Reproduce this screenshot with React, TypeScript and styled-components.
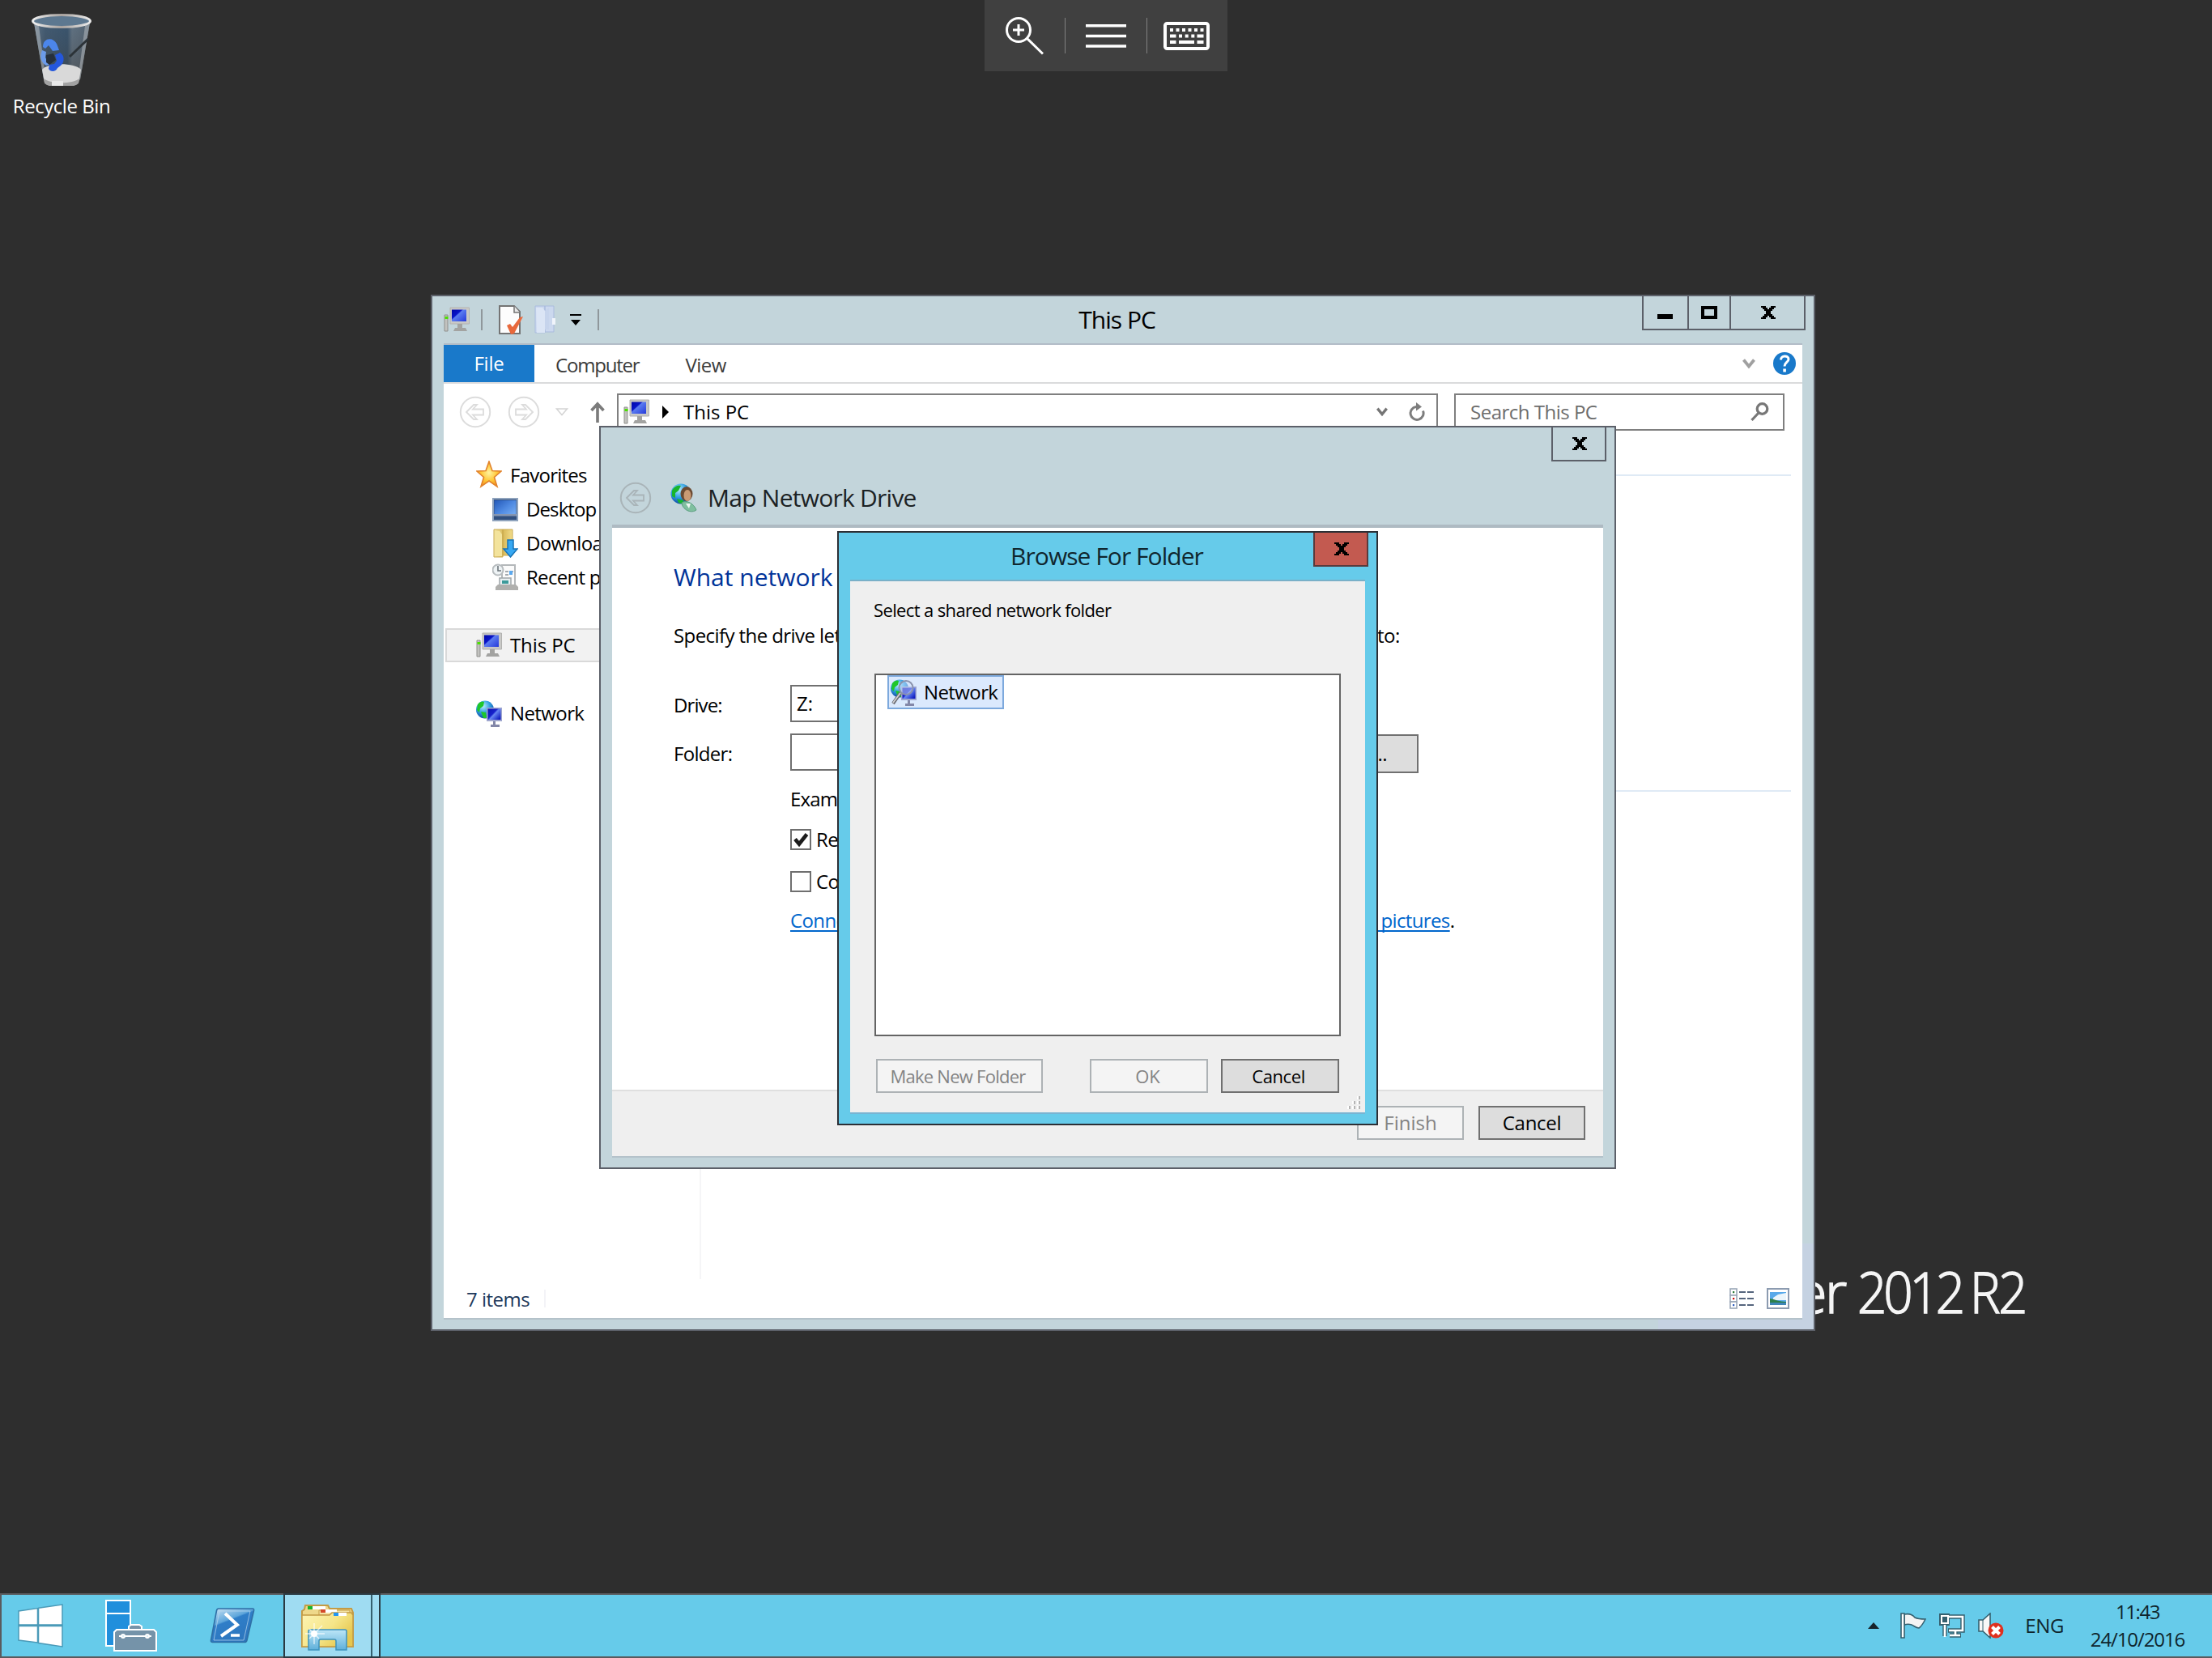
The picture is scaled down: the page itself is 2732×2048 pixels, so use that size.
import React from 'react';
import styled, { createGlobalStyle, css } from 'styled-components';

const GlobalStyle = createGlobalStyle`
  * { box-sizing: border-box; }
  html, body { margin: 0; padding: 0; }
  body { background: #2e2e2e; overflow: hidden; }
  svg { display: block; flex: none; }
`;

const color = {
  desktop: '#2e2e2e',
  frame: '#c3d5db',
  frameTint: '#c5d2e2',
  frameEdge: '#5c6069',
  active: '#66cbea',
  activeEdge: '#2c2f35',
  face: '#efefef',
  link: '#0066cc',
};

/* ---------- shared pieces ---------- */

const Label = styled.span<{ $track?: number; $size?: number; $color?: string }>`
  font-size: ${p => p.$size ?? 24}px;
  letter-spacing: ${p => p.$track ?? 0}px;
  color: ${p => p.$color ?? '#000'};
  white-space: pre;
`;

const Desktop = styled.main`
  position: relative;
  display: flex;
  flex-direction: column;
  justify-content: space-between;
  width: 2732px;
  height: 2048px;
  overflow: hidden;
  background: ${color.desktop};
  font-family: 'Open Sans', 'Noto Sans', sans-serif;
  font-size: 24px;
  line-height: 34px;
  color: #000;
`;

const Shortcut = styled.div`
  display: flex;
  flex-direction: column;
  align-items: center;
  gap: 8px;
  width: 152px;
  padding-top: 10px;
`;

const Watermark = styled.div`
  position: absolute;
  left: 2092px;
  top: 1547px;
  display: flex;
  height: 96px;
  line-height: 96px;
`;

const MarkWord = styled.span<{ $width: number; $track: number; $narrow?: number }>`
  width: ${p => p.$width}px;
  font-size: 70px;
  font-weight: 300;
  letter-spacing: ${p => p.$track}px;
  color: #f5f5f5;
  -webkit-text-stroke: 1.6px #f5f5f5;
  white-space: pre;
  transform: scaleX(${p => p.$narrow ?? 1});
  transform-origin: left center;
`;

const SessionBar = styled.div`
  position: absolute;
  left: 1216px;
  top: 0;
  display: flex;
  align-items: center;
  width: 300px;
  height: 88px;
  background: #404040;
`;

const SessionItem = styled.div<{ $w: number }>`
  display: flex;
  align-items: center;
  justify-content: center;
  width: ${p => p.$w}px;
  height: 44px;
  & + & { border-left: 1px solid #828282; }
`;

/* ---------- windows ---------- */

const Window = styled.section<{ $x: number; $y: number; $w: number; $h: number; $active?: boolean }>`
  position: absolute;
  left: ${p => p.$x}px;
  top: ${p => p.$y}px;
  display: flex;
  flex-direction: column;
  width: ${p => p.$w}px;
  height: ${p => p.$h}px;
  border: 2px solid ${p => (p.$active ? color.activeEdge : color.frameEdge)};
  background: ${p => (p.$active ? color.active : color.frame)};
`;

const ExplorerWindow = styled(Window)`
  background:
    linear-gradient(${color.frameTint}, ${color.frameTint}) right bottom / 192px 106px no-repeat,
    ${color.frame};
`;

const TitleBar = styled.header<{ $h: number }>`
  display: grid;
  grid-template-columns: 1fr auto 1fr;
  height: ${p => p.$h}px;
  line-height: ${p => p.$h}px;
  padding-right: 10px;
`;

const Title = styled(Label)<{ $shift?: number }>`
  padding-left: ${p => p.$shift ?? 0}px;
`;

const QuickAccess = styled.div`
  display: flex;
  align-items: center;
  padding: 0 0 0 14px;
`;

const QuickRule = styled.i<{ $before: number; $after: number }>`
  width: 2px;
  height: 26px;
  margin: 0 ${p => p.$after}px 0 ${p => p.$before}px;
  background: #8f979b;
`;

const Spacer = styled.i<{ $w: number }>`
  flex: none;
  width: ${p => p.$w}px;
`;

const Captions = styled.div`
  display: flex;
  justify-self: end;
  height: 42px;
`;

const CaptionButton = styled.button<{ $w: number; $last?: boolean; $danger?: boolean }>`
  display: flex;
  align-items: center;
  justify-content: center;
  width: ${p => p.$w}px;
  height: 42px;
  padding: 0 0 0 ${p => (p.$last ? 2 : 0)}px;
  border: solid ${p => (p.$danger ? '#5a3a3c' : color.frameEdge)};
  border-width: 0 ${p => (p.$last ? 2 : 0)}px 2px 2px;
  background: ${p => (p.$danger ? '#c35a50' : 'transparent')};
`;

const Client = styled.div<{ $top: string; $topSize: number; $bottom: string; $face?: boolean }>`
  display: flex;
  flex: 1;
  flex-direction: column;
  min-height: 0;
  margin: 0 14px 12px;
  border-top: ${p => p.$topSize}px solid ${p => p.$top};
  border-bottom: 2px solid ${p => p.$bottom};
  background: ${p => (p.$face ? color.face : '#fff')};
  background-clip: padding-box;
`;

/* ---------- explorer ---------- */

const Ribbon = styled.nav`
  display: flex;
  align-items: center;
  height: 48px;
  padding-right: 8px;
  border-bottom: 2px solid #dadbdc;
`;

const FileTab = styled.div`
  display: flex;
  align-items: center;
  justify-content: center;
  width: 112px;
  height: 46px;
  background: #1979ca;
`;

const Tab = styled.div<{ $left: number }>`
  padding: 4px 0 0 ${p => p.$left}px;
`;

const Push = styled.i`
  flex: 1;
`;

const AddressRow = styled.div`
  display: flex;
  align-items: center;
  height: 70px;
  padding: 0 22px 0 19px;
`;

const Field = styled.div<{ $w: number }>`
  display: flex;
  align-items: center;
  width: ${p => p.$w}px;
  height: 46px;
  border: 2px solid #7f7f7f;
  background: #fff;
`;

const Panes = styled.div`
  display: flex;
  flex: 1;
`;

const NavPane = styled.aside`
  display: flex;
  flex-direction: column;
  width: 318px;
  padding: 22px 0 0 2px;
  border-right: 2px solid #f5f5f7;
`;

const NavItem = styled.div<{ $depth?: number; $gap?: number; $selected?: boolean }>`
  display: flex;
  align-items: center;
  gap: 10px;
  height: 42px;
  margin-top: ${p => p.$gap ?? 0}px;
  padding-left: ${p => (p.$depth ? 58 : 38)}px;
  ${p => p.$selected && css`
    padding-left: 36px;
    border: 2px solid #d9d9d9;
    background: #f2f2f2;
  `}
`;

const ContentPane = styled.div`
  display: flex;
  flex: 1;
  flex-direction: column;
  padding: 42px 14px 0 20px;
`;

const GroupRule = styled.i<{ $gap?: number }>`
  height: 2px;
  margin-top: ${p => p.$gap ?? 0}px;
  background: #dfeaf5;
`;

const StatusBar = styled.footer`
  display: flex;
  align-items: center;
  height: 48px;
  padding: 0 16px 0 28px;
`;

const StatusText = styled(Label)`
  padding-top: 2px;
`;

const StatusRule = styled.i`
  width: 2px;
  height: 22px;
  margin-left: 18px;
  background: #f3f3f7;
`;

/* ---------- dialogs ---------- */

const WizardHeader = styled.div`
  display: flex;
  align-items: center;
  height: 78px;
  padding: 12px 0 0 23px;
`;

const WizardBody = styled.div`
  display: flex;
  flex: 1;
  flex-direction: column;
  padding: 31px 0 0 76px;
`;

const Line = styled.div<{ $h: number; $gap?: number; $indent?: boolean }>`
  display: flex;
  align-items: center;
  height: ${p => p.$h}px;
  margin-top: ${p => p.$gap ?? 0}px;
  padding-left: ${p => (p.$indent ? 144 : 0)}px;
`;

const FieldName = styled.div`
  width: 144px;
  padding-top: 3px;
`;

const TextBox = styled.div`
  display: flex;
  align-items: center;
  width: 596px;
  height: 46px;
  padding-left: 6px;
  border: 2px solid #707070;
  background: #fff;
`;

const CheckBox = styled.span`
  display: flex;
  align-items: center;
  justify-content: center;
  width: 26px;
  height: 26px;
  margin-right: 6px;
  border: 2px solid #6f6f6f;
  background: #fff;
`;

const Link = styled.a`
  color: ${color.link};
  letter-spacing: -0.63px;
  white-space: pre;
  text-decoration: underline;
  text-decoration-thickness: 2px;
  text-decoration-skip-ink: none;
  text-underline-offset: 3px;
`;

const WizardFooter = styled.footer`
  display: flex;
  justify-content: flex-end;
  gap: 18px;
  height: 82px;
  padding: 18px 22px 0 0;
  border-top: 2px solid #dfdfdf;
  background: ${color.face};
`;

const PushButton = styled.button<{ $w: number; $off?: boolean; $size?: number; $track?: number; $inset?: number }>`
  display: flex;
  align-items: center;
  justify-content: center;
  width: ${p => p.$w}px;
  height: 42px;
  padding: 0 ${p => p.$inset ?? 0}px 0 0;
  border: 2px solid ${p => (p.$off ? '#adb2b5' : '#707070')};
  background: ${p => (p.$off ? '#f4f4f4' : '#dddddd')};
  color: ${p => (p.$off ? '#838383' : '#000')};
  font-family: inherit;
  font-size: ${p => p.$size ?? 24}px;
  letter-spacing: ${p => p.$track ?? 0}px;
  line-height: 34px;
  white-space: pre;
`;

const BrowseButton = styled(PushButton)`
  height: 48px;
  margin-top: 4px;
`;

const Prompt = styled.div`
  height: 114px;
  padding: 18px 0 0 29px;
`;

const Tree = styled.div`
  height: 448px;
  margin: 0 30px;
  padding-left: 14px;
  border: 2px solid #646464;
  background: #fff;
`;

const TreeItem = styled.div`
  display: flex;
  align-items: center;
  gap: 9px;
  width: 144px;
  height: 42px;
  padding-left: 2px;
  border: 2px solid #7da9dd;
  background: #dbe9fd;
`;

const DialogButtons = styled.div`
  display: flex;
  padding: 28px 0 0 32px;
`;

const GripRow = styled.div`
  display: flex;
  flex: 1;
  align-items: flex-end;
  justify-content: flex-end;
  padding: 0 5px 3px 0;
`;

/* ---------- task bar ---------- */

const TaskBar = styled.footer`
  display: flex;
  align-items: center;
  height: 80px;
  border: solid #5a5b5e;
  border-width: 2px 0 2px 2px;
  background: ${color.active};
`;

const TaskSlot = styled.div<{ $w: number; $pad: number }>`
  display: flex;
  align-items: center;
  width: ${p => p.$w}px;
  height: 76px;
  padding-left: ${p => p.$pad}px;
`;

const RunningTask = styled.div`
  display: flex;
  width: 120px;
  height: 80px;
  border: 2px solid #2b3a42;
  background: #9fdcf2;
`;

const RunningFace = styled.div`
  display: flex;
  align-items: center;
  width: 108px;
  padding: 5px 0 0 20px;
  border-right: 2px solid #35606f;
`;

const Tray = styled.div`
  display: flex;
  align-items: center;
  margin-left: auto;
  padding-right: 32px;
`;

const Clock = styled.div`
  display: flex;
  flex-direction: column;
  align-items: center;
  width: 120px;
`;

/* ---------- drawings ---------- */

const CloseGlyph = () => (
  <svg width="18" height="16" viewBox="0 0 9 8" shapeRendering="crispEdges">
    <path d="M0 0h3v1h1v1h1V1h1V0h3v1H8v1H7v1H6v2h1v1h1v1h1v1H6V7H5V6H4v1H3v1H0V7h1V6h1V5h1V3H2V2H1V1H0z" />
  </svg>
);

const MinGlyph = () => (
  <svg width="20" height="16" viewBox="0 0 20 16"><path d="M0 10h19v6H0z" /></svg>
);

const MaxGlyph = () => (
  <svg width="20" height="16" viewBox="0 0 20 16"><path d="M0 0h20v16H0zM4 4v8h12V4z" fillRule="evenodd" /></svg>
);

const ThisPcIcon = () => (
  <svg width="32" height="32" viewBox="0 0 32 32">
    <defs>
      <linearGradient id="pcScreen" x1="0" y1="0" x2="1" y2=".9">
        <stop offset="0" stopColor="#0008a8" /><stop offset=".38" stopColor="#0914c8" />
        <stop offset=".45" stopColor="#5b7cf0" /><stop offset="1" stopColor="#2a3fdc" />
      </linearGradient>
    </defs>
    <path d="M1 10h4v20H1z" fill="#c2c2bf" stroke="#8f8f8c" />
    <path d="M1.500 12h4v3h-4z" fill="#4be000" />
    <path d="M8 1h23.500v20H8z" fill="#c9c9c7" stroke="#b2b2b0" />
    <path d="M10 3.500h18v14.500H10z" fill="url(#pcScreen)" />
    <path d="M17 21h6v5h4l2 4H12l2-4h3z" fill="#a3a3a1" />
  </svg>
);

const NetworkIcon = ({ search }: { search?: boolean }) => (
  <svg width="32" height="33" viewBox="0 0 32 33">
    <defs>
      <radialGradient id="netGlobe" cx=".4" cy=".3" r=".75">
        <stop offset="0" stopColor="#b8ecff" /><stop offset=".5" stopColor="#2f9fe0" /><stop offset="1" stopColor="#0a3c9c" />
      </radialGradient>
      <linearGradient id="netScreen" x1="0" y1="0" x2="1" y2=".8">
        <stop offset="0" stopColor="#0a12b4" /><stop offset=".45" stopColor="#1722cc" />
        <stop offset=".55" stopColor="#6687f2" /><stop offset="1" stopColor="#101cc0" />
      </linearGradient>
    </defs>
    <circle cx="11" cy="11.500" r="11" fill="url(#netGlobe)" />
    <path d="M2 5c3-4 7-4 8-3l-1 5-4 3-1 5-3-3zM6 14l6 1 1 7-4 0z" fill="#1fc72a" />
    <path d="M13 9h19v17H13z" fill="#9fa6cf" />
    <path d="M14.500 10.500h16v13.500h-16z" fill="url(#netScreen)" />
    <path d="M21 26h3v4h5v3H18v-3h3z" fill="#8387a8" />
    {search && (
      <>
        <circle cx="19" cy="10.500" r="8.500" fill="#cfe3ff" fillOpacity=".5" stroke="#8b93ad" strokeWidth="2" />
        <path d="M12 17 3 30" stroke="#6d6d74" strokeWidth="4" />
        <path d="M12 17 3 29" stroke="#d5d5d8" strokeWidth="1.500" />
      </>
    )}
  </svg>
);

const PropertiesIcon = () => (
  <svg width="30" height="36" viewBox="0 0 30 36">
    <path d="M1 1h18l7 7v27H1z" fill="#fdfdfd" stroke="#747474" strokeWidth="2" />
    <path d="M19 1v8h7" fill="#e9e9e9" stroke="#747474" strokeWidth="1.500" />
    <path d="M10 25l4-2 3 4 9-12 4-1-11 21-4 1z" fill="#e8693c" />
  </svg>
);

const NewFolderIcon = () => (
  <svg width="26" height="36" viewBox="0 0 26 36">
    <path d="M1 1h12v33H1zM13 1h11v32H13z" fill="#cbd8ee" stroke="#a9bbdd" />
    <path d="M2 3h8l3 4v27H3z" fill="#dbe5f5" /><path d="M13 7l5-4v27h-5z" fill="#c6d4ec" /><path d="M22 16h4v8h-4z" fill="#f0f4fb" />
  </svg>
);

const CircleArrow = ({ stroke, right }: { stroke: string; right?: boolean }) => (
  <svg width="40" height="40" viewBox="0 0 40 40" fill="none" stroke={stroke}>
    <circle cx="20" cy="20" r="18.200" strokeWidth="2" />
    <path transform={right ? 'rotate(180 20 20)' : undefined} strokeWidth="1.800" d="M9 20l9-9h4l-5 5.500h13v7H17l5 5.500h-4z" />
  </svg>
);

const StarIcon = () => (
  <svg width="32" height="36" viewBox="0 0 32 36">
    <defs><radialGradient id="star" cx=".5" cy=".45" r=".55"><stop offset="0" stopColor="#fff3a0" /><stop offset=".6" stopColor="#ffc737" /><stop offset="1" stopColor="#f59a23" /></radialGradient></defs>
    <path d="M16 1l4 11.500 11 .500-8.500 7.500L26 32l-10-7L6 32l3.500-11.500L1 13l11-.500z" fill="url(#star)" stroke="#e2832b" strokeWidth="1.600" />
  </svg>
);

const DesktopIcon = () => (
  <svg width="32" height="29" viewBox="0 0 32 29">
    <defs><linearGradient id="desk" x1="0" y1="0" x2="1" y2=".8"><stop offset="0" stopColor="#2358b8" /><stop offset=".6" stopColor="#4f8ae2" /><stop offset="1" stopColor="#6fa6ee" /></linearGradient></defs>
    <path d="M1 1h30v27H1z" fill="#31507f" stroke="#8fa3bd" strokeWidth="2" />
    <path d="M2.500 3h27v17h-27z" fill="url(#desk)" /><path d="M2 20h28v2.500H2z" fill="#8595b0" />
  </svg>
);

const DownloadsIcon = () => (
  <svg width="32" height="36" viewBox="0 0 32 36">
    <defs><linearGradient id="dlFolder"><stop offset="0" stopColor="#f6e9a8" /><stop offset=".5" stopColor="#d9ba5a" /><stop offset="1" stopColor="#f2dd8b" /></linearGradient></defs>
    <path d="M2 1h11v34H2zM13 1h12v32H13z" fill="url(#dlFolder)" stroke="#c9a94e" />
    <path d="M3 3h6l3 4v27H4z" fill="#f3e39c" />
    <path d="M19 14h7v11h5l-8.500 10L14 25h5z" fill="#37a8f2" stroke="#1673b8" strokeWidth="1.500" />
  </svg>
);

const RecentIcon = () => (
  <svg width="32" height="34" viewBox="0 0 32 34">
    <path d="M12 2h16v26H12z" fill="#fbfbfb" stroke="#b4b8ba" strokeWidth="2" />
    <path d="M16 10h4M22 10h4M16 14h4" stroke="#a5abb0" strokeWidth="2" /><path d="M21 9h4v5h-4z" fill="#5aa8ee" />
    <path d="M9 18h14v9H9z" fill="#e9f0f2" stroke="#a0a7aa" strokeWidth="1.500" /><path d="M12 21h8v4h-8z" fill="#3c9a9a" />
    <path d="M7 26h22l3 3v4H4v-4z" fill="#b0b0ae" />
    <circle cx="7" cy="8" r="6.500" fill="#eef3f5" stroke="#b7bcbf" strokeWidth="2" /><path d="M7 3v6h4" stroke="#6b747a" strokeWidth="1.600" fill="none" />
  </svg>
);

const MapDriveIcon = () => (
  <svg width="33" height="36" viewBox="0 0 33 36">
    <circle cx="13" cy="13" r="12.500" fill="url(#netGlobe)" />
    <path d="M2 9c3-6 8-7 11-6l-3 6-4 3 0 6-4-2zM8 19l8 2 0 5-6-2z" fill="#18b52c" />
    <path d="M14 24c6-4 15 1 18 9-4 3-12 3-17-5z" fill="#7fbf9f" stroke="#5a9f7f" />
    <ellipse cx="20" cy="13" rx="7.500" ry="9" fill="#6b4a32" /><ellipse cx="21" cy="15" rx="4.500" ry="7" fill="#c99a74" />
    <path d="M19 25l4 6 2-6z" fill="#eef6f2" />
  </svg>
);

const Chevron = ({ c, w, h }: { c: string; w: number; h: number }) => (
  <svg width={w} height={h} viewBox="0 0 16 13"><path d="M1.500 1.500 8 9.500l6.500-8" fill="none" stroke={c} strokeWidth="3.800" /></svg>
);

const HelpIcon = () => (
  <svg width="28" height="28" viewBox="0 0 28 28">
    <circle cx="14" cy="14" r="14" fill="#1979ca" />
    <path d="M9.500 9.500c0-6 9.500-6 9.500-.800 0 3.700-5 4-5 8.800" fill="none" stroke="#fff" strokeWidth="3" />
    <path d="M12.300 20.500h3.600v4h-3.600z" fill="#fff" />
  </svg>
);

const RecycleBin = () => (
  <svg width="76" height="96" viewBox="0 0 76 96">
    <defs>
      <linearGradient id="binBody"><stop offset="0" stopColor="#8c9aa5" /><stop offset=".2" stopColor="#50667a" /><stop offset=".6" stopColor="#3f5a72" /><stop offset=".68" stopColor="#8b949a" /><stop offset="1" stopColor="#71777b" /></linearGradient>
      <linearGradient id="binRim"><stop offset="0" stopColor="#f0f0f0" /><stop offset=".5" stopColor="#a8a29e" /><stop offset="1" stopColor="#ececec" /></linearGradient>
      <linearGradient id="binFade" x1="0" y1="0" x2="0" y2="1"><stop offset="0" stopColor="#35506b" stopOpacity=".5" /><stop offset="1" stopColor="#3a3c3e" stopOpacity=".7" /></linearGradient>
    </defs>
    <path d="M4 18h69l-12 70c-8 8-36 8-45 0z" fill="url(#binBody)" />
    <path d="M4 18h69l-12 70c-8 8-36 8-45 0z" fill="url(#binFade)" />
    <path d="M4 18l12 70 3 2L10 22zM73 18L61 88l-3 2 9-68z" fill="#c9ccce" fillOpacity=".45" />
    <path d="M14 76c6-9 41-9 48 0l-3 16c-8 7-33 7-42 0z" fill="#d9d9d9" />
    <path d="M16 87c8 7 36 7 44 0l-1 6c-8 7-34 7-42 0z" fill="#a2a2a2" /><path d="M26 90h14v7H26z" fill="#e9e9e9" />
    <path d="M15 48c0-11 12-13 17-4l3 8-8 1-5-7-4 4z" fill="#4c86ea" />
    <path d="M14 52l5 2-1 7 5 9-4 1c-7-4-8-12-5-19z" fill="#6b9bea" />
    <path d="M19 58l9-2 3 8-8 6-4-3z" fill="#26303c" />
    <path d="M30 58l6-3c6 3 6 12 1 16l-4 3c-2 5-9 5-11 1l1-5 6-1 3-4z" fill="#2457dd" />
    <path d="M71 38 48 60" stroke="#2c3338" strokeWidth="3" />
    <ellipse cx="38" cy="16" rx="35.500" ry="7.500" fill="#5d7890" stroke="url(#binRim)" strokeWidth="3" />
  </svg>
);

const ZoomIcon = () => (
  <svg width="47" height="47" viewBox="0 0 47 47" fill="none" stroke="#fff" strokeWidth="3">
    <circle cx="16" cy="16" r="14.500" /><path d="M26.500 26.500 46 45.500M9 16h14M16 9v14" />
  </svg>
);

const MenuIcon = () => (
  <svg width="50" height="29" viewBox="0 0 50 29" fill="#fff"><path d="M0 0h50v3.500H0zM0 12.700h50v3.500H0zM0 25.300h50v3.500H0z" /></svg>
);

const KeyboardIcon = () => (
  <svg width="57" height="35" viewBox="0 0 57 35">
    <rect x="2" y="2" width="53" height="31" rx="2.500" fill="none" stroke="#fff" strokeWidth="4" />
    <path fill="#fff" d="M8 8h4v4H8zM15.500 8h4v4h-4zM23 8h4v4h-4zM30.500 8h4v4h-4zM38 8h4v4h-4zM45.500 8h4v4h-4zM8 15.500h7.500v4H8zM19 15.500h4v4h-4zM26.700 15.500h4v4h-4zM34.300 15.500h4v4h-4zM41.500 15.500h8v4h-8zM8 23h7.500v4H8zM19 23h19v4H19zM41.500 23h8v4h-8z" />
  </svg>
);

const DetailsViewIcon = () => (
  <svg width="30" height="26" viewBox="0 0 30 26">
    {['#2f7a3a', '#c81010', '#2e5fc0'].map((c, i) => (
      <g key={c} transform={`translate(0 ${i * 8})`}>
        <rect x="1" y="1" width="8" height="8" fill="#fff" stroke="#9aa7b7" strokeWidth="1.600" />
        <rect x="4" y="4" width="2.200" height="2.200" fill={c} />
        <path d="M12 5h8M22 5h8" stroke="#55657d" strokeWidth="2" />
      </g>
    ))}
  </svg>
);

const PictureViewIcon = () => (
  <svg width="28" height="26" viewBox="0 0 28 26">
    <rect x="1" y="1" width="26" height="24" fill="#fff" stroke="#8c9bb0" strokeWidth="2" />
    <path d="M4 5h20v16H4z" fill="#58a9ea" /><path d="M8 12l6-4 10-2v9H8z" fill="#eaf5fb" />
    <path d="M4 13c6 1 12 4 20 4v2H4z" fill="#2c7f4c" /><path d="M4 18h20v3H4z" fill="#3f86b8" />
  </svg>
);

const WindowsLogo = () => (
  <svg width="56" height="54" viewBox="0 0 56 54" fill="#fff" stroke="#4a9ab8" strokeWidth="1.500">
    <path d="M1 9 24.500 5.500V26H1zM25.500 5.300 55 1v25H25.500zM1 27.500h23.500V48L1 45zM25.500 27.500H55V53l-29.500-4.500z" />
  </svg>
);

const ServerManagerIcon = () => (
  <svg width="64" height="64" viewBox="0 0 64 64" stroke="#fff" strokeWidth="2">
    <path d="M1 1h30v56H1z" fill="#218fdc" /><path d="M1 17h30" />
    <path d="M29 37v-4l3-2h10l3 2v4z" fill="#7793a8" />
    <path d="M11 40l3-3h46l3 3v23H11z" fill="#7593a9" /><path d="M17 45h40" />
    <circle cx="22" cy="45" r="2" fill="#cfeaf6" /><circle cx="52" cy="45" r="2" fill="#cfeaf6" />
  </svg>
);

const PowerShellIcon = () => (
  <svg width="58" height="48" viewBox="0 0 58 48">
    <defs><linearGradient id="psFace" x1="0" y1="0" x2=".5" y2="1"><stop offset="0" stopColor="#cfe6f6" /><stop offset=".42" stopColor="#5ea6db" /><stop offset=".46" stopColor="#2f7ec8" /><stop offset="1" stopColor="#2d76be" /></linearGradient></defs>
    <path d="M12 3h42q2 0 1.500 2.500L47 42q-.500 2.500-3 2.500H4.500q-2.500 0-2-2.500L9.500 5.500Q10 3 12 3z" fill="url(#psFace)" stroke="#2f6fa6" strokeWidth="1.600" />
    <path d="M13 6h38l-8 36H6z" fill="none" stroke="#bcd8ee" strokeOpacity=".7" />
    <path d="M20 9l15 14-20 14" fill="none" stroke="#fff" strokeWidth="4" /><path d="M27 36h11" stroke="#fff" strokeWidth="3.500" />
  </svg>
);

const FileExplorerIcon = () => (
  <svg width="65" height="60" viewBox="0 0 65 60">
    <defs>
      <linearGradient id="feFace" x1="0" y1="0" x2="1" y2=".6"><stop offset="0" stopColor="#fdf4b4" /><stop offset=".6" stopColor="#f5e588" /><stop offset="1" stopColor="#e6c74f" /></linearGradient>
      <linearGradient id="feStand" x1="0" y1="0" x2="0" y2="1"><stop offset="0" stopColor="#bde6f7" /><stop offset="1" stopColor="#5fb0da" /></linearGradient>
    </defs>
    <path d="M5 2h28l2 4h27l2 5v42H1V9l3-2z" fill="#eed88a" stroke="#c49b45" strokeWidth="2" />
    <path d="M10 3h20v4H10z" fill="#fff" /><path d="M8 3h6v4H8z" fill="#17b52b" />
    <path d="M22 8h38v6H22z" fill="#f4e3a4" stroke="#c49b45" /><path d="M30 7h14v4H30z" fill="#fff" /><path d="M24 7h6v4h-6z" fill="#d4492a" />
    <path d="M1 14h34l3-3h24l2 3v39H1z" fill="url(#feFace)" stroke="#c49b45" strokeWidth="1.500" />
    <path d="M40 11h16v4H40z" fill="#fff" /><path d="M40 11h6v4h-6z" fill="#2196f3" />
    <path d="M9 34q0-2 2-2h43q2 0 2 2v23H43V46q0-2-2-2H24q-2 0-2 2v11H9z" fill="url(#feStand)" stroke="#3d93be" strokeWidth="1.500" />
    <path d="M16 24v26M5 37h24M10 31l12 12M26 27 10 43" stroke="#fff" strokeOpacity=".7" strokeWidth="1.400" /><circle cx="16" cy="37" r="4" fill="#fff" />
  </svg>
);

const FlagIcon = () => (
  <svg width="32" height="32" viewBox="0 0 32 32" stroke="#35606f" strokeWidth="1.600">
    <path d="M5 2c5-1 10 0 13 4 4 2 8 2 13 2-2 4-5 9-8 11-4 0-6-3-9-4-3-1-6-1-9 0z" fill="#f4f4f4" /><path d="M1 1h4v30H1z" fill="#fff" />
  </svg>
);

const WiredIcon = () => (
  <svg width="32" height="31" viewBox="0 0 32 31" fill="none">
    <path d="M11 4h18v17H11M20 21v5M13 27h14M7 14v14" stroke="#35606f" strokeWidth="5.500" /><path d="M2 2h9v11H2z" fill="#35606f" stroke="#35606f" strokeWidth="4" />
    <path d="M12 4h17v17H12M20 21v5M13 27h13M7 14v15" stroke="#fff" strokeWidth="2.600" /><path d="M3 3h8v9H3z" stroke="#fff" strokeWidth="2" />
  </svg>
);

const SpeakerIcon = () => (
  <svg width="32" height="32" viewBox="0 0 32 32">
    <path d="M1 9h5L15 1v30l-9-8H1z" fill="#f7f7f7" stroke="#35606f" strokeWidth="1.600" /><path d="M6 9v14" stroke="#35606f" />
    <circle cx="22" cy="22" r="9.500" fill="#e0301e" /><path d="M17.500 17.500l9 9M26.500 17.500l-9 9" stroke="#fff" strokeWidth="4" />
  </svg>
);

/* ---------- screens ---------- */

const Explorer = () => (
  <ExplorerWindow $x={532} $y={364} $w={1710} $h={1280}>
    <TitleBar $h={58}>
      <QuickAccess>
        <ThisPcIcon /><QuickRule $before={14} $after={20} />
        <PropertiesIcon /><Spacer $w={14} /><NewFolderIcon /><Spacer $w={18} />
        <svg width="14" height="14" viewBox="0 0 14 14"><path d="M0 0h14v2H0zM1 7h12l-6 7z" /></svg>
        <QuickRule $before={20} $after={0} />
      </QuickAccess>
      <Title $size={30} $track={-1} $shift={2}>This PC </Title>
      <Captions>
        <CaptionButton $w={56}><MinGlyph /></CaptionButton>
        <CaptionButton $w={52}><MaxGlyph /></CaptionButton>
        <CaptionButton $w={94} $last><CloseGlyph /></CaptionButton>
      </Captions>
    </TitleBar>
    <Client $top="#b2bcc7" $topSize={2} $bottom="#b4c2ca">
      <Ribbon>
        <FileTab><Label $color="#fff" $track={-0.2}>File</Label></FileTab>
        <Tab $left={26}><Label $color="#3b3b3b" $track={-1.2}>Computer</Label></Tab>
        <Tab $left={57}><Label $color="#3b3b3b" $track={-0.5}>View</Label></Tab>
        <Push />
        <Chevron c="#a0a0a0" w={16} h={13} /><Spacer $w={22} /><HelpIcon />
      </Ribbon>
      <AddressRow>
        <CircleArrow stroke="#dcdcdc" /><Spacer $w={20} /><CircleArrow stroke="#dcdcdc" right /><Spacer $w={19} />
        <svg width="16" height="10" viewBox="0 0 16 10"><path d="M1.500 1h13L8 8.500z" fill="#fff" stroke="#d4d4d4" strokeWidth="1.500" /></svg>
        <Spacer $w={27} />
        <svg width="18" height="26" viewBox="0 0 18 26"><path d="M9 26V4M1.500 11 9 3l7.500 8" fill="none" stroke="#7b7b7b" strokeWidth="3.600" /></svg>
        <Spacer $w={15} />
        <Field $w={1014}>
          <Spacer $w={6} /><ThisPcIcon /><Spacer $w={16} />
          <svg width="8" height="16" viewBox="0 0 8 16"><path d="M0 0l8 8-8 8z" /></svg>
          <Spacer $w={18} /><Label>This PC</Label><Push />
          <Chevron c="#757575" w={14} h={14} /><Spacer $w={26} />
          <svg width="20" height="24" viewBox="0 0 20 24"><path d="M13 5.500H9a8 8 0 1 0 8.500 5" fill="none" stroke="#7d7d7d" strokeWidth="3" /><path d="M9 0l7 5.500-7 5z" fill="#7d7d7d" /></svg>
          <Spacer $w={14} />
        </Field>
        <Spacer $w={20} />
        <Field $w={408}>
          <Spacer $w={18} /><Label $color="#6d6d6d" $track={-0.5}>Search This PC</Label><Push />
          <svg width="24" height="24" viewBox="0 0 24 24" fill="none" stroke="#777" strokeWidth="3.200"><circle cx="15.500" cy="8" r="6.300" /><path d="M11 13 2.500 22" /></svg>
          <Spacer $w={17} />
        </Field>
      </AddressRow>
      <Panes>
        <NavPane>
          <NavItem><StarIcon /><Label $track={-0.75}>Favorites</Label></NavItem>
          <NavItem $depth={1}><DesktopIcon /><Label $track={-0.9}>Desktop</Label></NavItem>
          <NavItem $depth={1}><DownloadsIcon /><Label $track={-0.7}>Downloads</Label></NavItem>
          <NavItem $depth={1}><RecentIcon /><Label $track={-0.7}>Recent places</Label></NavItem>
          <NavItem $gap={42} $selected><ThisPcIcon /><Label $track={-0.1}>This PC</Label></NavItem>
          <NavItem $gap={42}><NetworkIcon /><Label $track={-0.6}>Network</Label></NavItem>
        </NavPane>
        <ContentPane><GroupRule /><GroupRule $gap={388} /></ContentPane>
      </Panes>
      <StatusBar>
        <StatusText $color="#1e395b" $track={-0.5}>7 items</StatusText><StatusRule /><Push />
        <DetailsViewIcon /><Spacer $w={16} /><PictureViewIcon />
      </StatusBar>
    </Client>
  </ExplorerWindow>
);

const MapDrive = () => (
  <Window $x={740} $y={526} $w={1256} $h={918}>
    <TitleBar $h={42}>
      <i /><i />
      <Captions><CaptionButton $w={68} $last><CloseGlyph /></CaptionButton></Captions>
    </TitleBar>
    <WizardHeader>
      <CircleArrow stroke="#a9b4b8" /><Spacer $w={23} /><MapDriveIcon /><Spacer $w={13} />
      <Label $size={30} $track={-0.75} $color="#1c2224">Map Network Drive</Label>
    </WizardHeader>
    <Client $top="#aebac2" $topSize={4} $bottom="#b4c2ca">
      <WizardBody>
        <Line $h={60}><Label $size={30} $color="#003399">What network folder</Label></Line>
        <Line $h={42} $gap={21}><Label $track={-0.58}>Specify the drive letter for the connection and the folder that you want to connect to:</Label></Line>
        <Line $h={46} $gap={40}><FieldName><Label $track={-0.9}>Drive:</Label></FieldName><TextBox><Label>Z:</Label></TextBox></Line>
        <Line $h={46} $gap={14}>
          <FieldName><Label $track={-0.7}>Folder:</Label></FieldName><TextBox /><Spacer $w={28} />
          <BrowseButton $w={152} $track={-0.4} $inset={24}>Browse...</BrowseButton>
        </Line>
        <Line $h={40} $gap={15} $indent><Label $track={-0.8}>Example: \\server\share</Label></Line>
        <Line $h={26} $gap={17} $indent>
          <CheckBox><svg width="22" height="22" viewBox="0 0 22 22"><path d="M4 10.500 9 16.500 18.500 4.500" fill="none" stroke="#1c1c1c" strokeWidth="4.600" /></svg></CheckBox>
          <Label $track={-0.6}>Reconnect at sign-in</Label>
        </Line>
        <Line $h={26} $gap={26} $indent><CheckBox /><Label $track={-0.6}>Connect using different credentials</Label></Line>
        <Line $h={30} $gap={20} $indent><Link>Connect to a Web site that you can use to store your documents and pictures</Link><Label>.</Label></Line>
      </WizardBody>
      <WizardFooter>
        <PushButton $w={132} $off>Finish</PushButton>
        <PushButton $w={132} $track={-0.3}>Cancel</PushButton>
      </WizardFooter>
    </Client>
  </Window>
);

const BrowseForFolder = () => (
  <Window $x={1034} $y={656} $w={668} $h={734} $active>
    <TitleBar $h={58}>
      <i />
      <Title $size={30} $track={-0.95} $shift={8} $color="#10262e">Browse For Folder</Title>
      <Captions><CaptionButton $w={68} $last $danger><CloseGlyph /></CaptionButton></Captions>
    </TitleBar>
    <Client $top="#79b0c8" $topSize={2} $bottom="#79b4d2" $face>
      <Prompt><Label $size={22} $track={-0.63}>Select a shared network folder</Label></Prompt>
      <Tree><TreeItem><NetworkIcon search /><Label $track={-0.6}>Network</Label></TreeItem></Tree>
      <DialogButtons>
        <PushButton $w={206} $size={22} $track={-0.75} $inset={4} $off>Make New Folder</PushButton><Spacer $w={58} />
        <PushButton $w={146} $size={22} $inset={3} $off>OK</PushButton><Spacer $w={16} />
        <PushButton $w={146} $size={22} $track={-0.4} $inset={4}>Cancel</PushButton>
      </DialogButtons>
      <GripRow>
        <svg width="17" height="17" viewBox="0 0 17 17">
          {[[12, 0], [6, 6], [12, 6], [0, 12], [6, 12], [12, 12]].map(([x, y]) => (
            <g key={`${x}-${y}`}><path d={`M${x} ${y}h4v4h-4z`} fill="#fff" /><path d={`M${x + 2} ${y}h2v4h-2z`} fill="#b5b5b5" /></g>
          ))}
        </svg>
      </GripRow>
    </Client>
  </Window>
);

export default function App() {
  return (
    <>
      <GlobalStyle />
      <Desktop>
        <Shortcut>
          <RecycleBin />
          <Label $color="#fff" $track={-0.45}>Recycle Bin</Label>
        </Shortcut>
        <Watermark>
          <MarkWord $width={202} $track={-2.500}>Server</MarkWord>
          <MarkWord $width={139} $track={-4.500} $narrow={0.91}>2012</MarkWord>
          <MarkWord $width={80} $track={-2.500} $narrow={0.9}>R2</MarkWord>
        </Watermark>
        <SessionBar>
          <SessionItem $w={99}><ZoomIcon /></SessionItem>
          <SessionItem $w={101}><MenuIcon /></SessionItem>
          <SessionItem $w={97}><KeyboardIcon /></SessionItem>
        </SessionBar>
        <Explorer />
        <MapDrive />
        <BrowseForFolder />
        <TaskBar>
          <TaskSlot $w={108} $pad={20}><WindowsLogo /></TaskSlot>
          <TaskSlot $w={128} $pad={20}><ServerManagerIcon /></TaskSlot>
          <TaskSlot $w={112} $pad={20}><PowerShellIcon /></TaskSlot>
          <RunningTask><RunningFace><FileExplorerIcon /></RunningFace></RunningTask>
          <Tray>
            <svg width="14" height="8" viewBox="0 0 14 8"><path d="M0 8 7 0l7 8z" fill="#17242a" /></svg>
            <Spacer $w={26} /><FlagIcon /><Spacer $w={16} /><WiredIcon /><Spacer $w={16} /><SpeakerIcon /><Spacer $w={26} />
            <Label $track={-0.4} $color="#0f252d">ENG</Label><Spacer $w={31} />
            <Clock>
              <Label $track={-1.4} $color="#0f252d">11:43</Label>
              <Label $track={-1.1} $color="#0f252d">24/10/2016</Label>
            </Clock>
          </Tray>
        </TaskBar>
      </Desktop>
    </>
  );
}
